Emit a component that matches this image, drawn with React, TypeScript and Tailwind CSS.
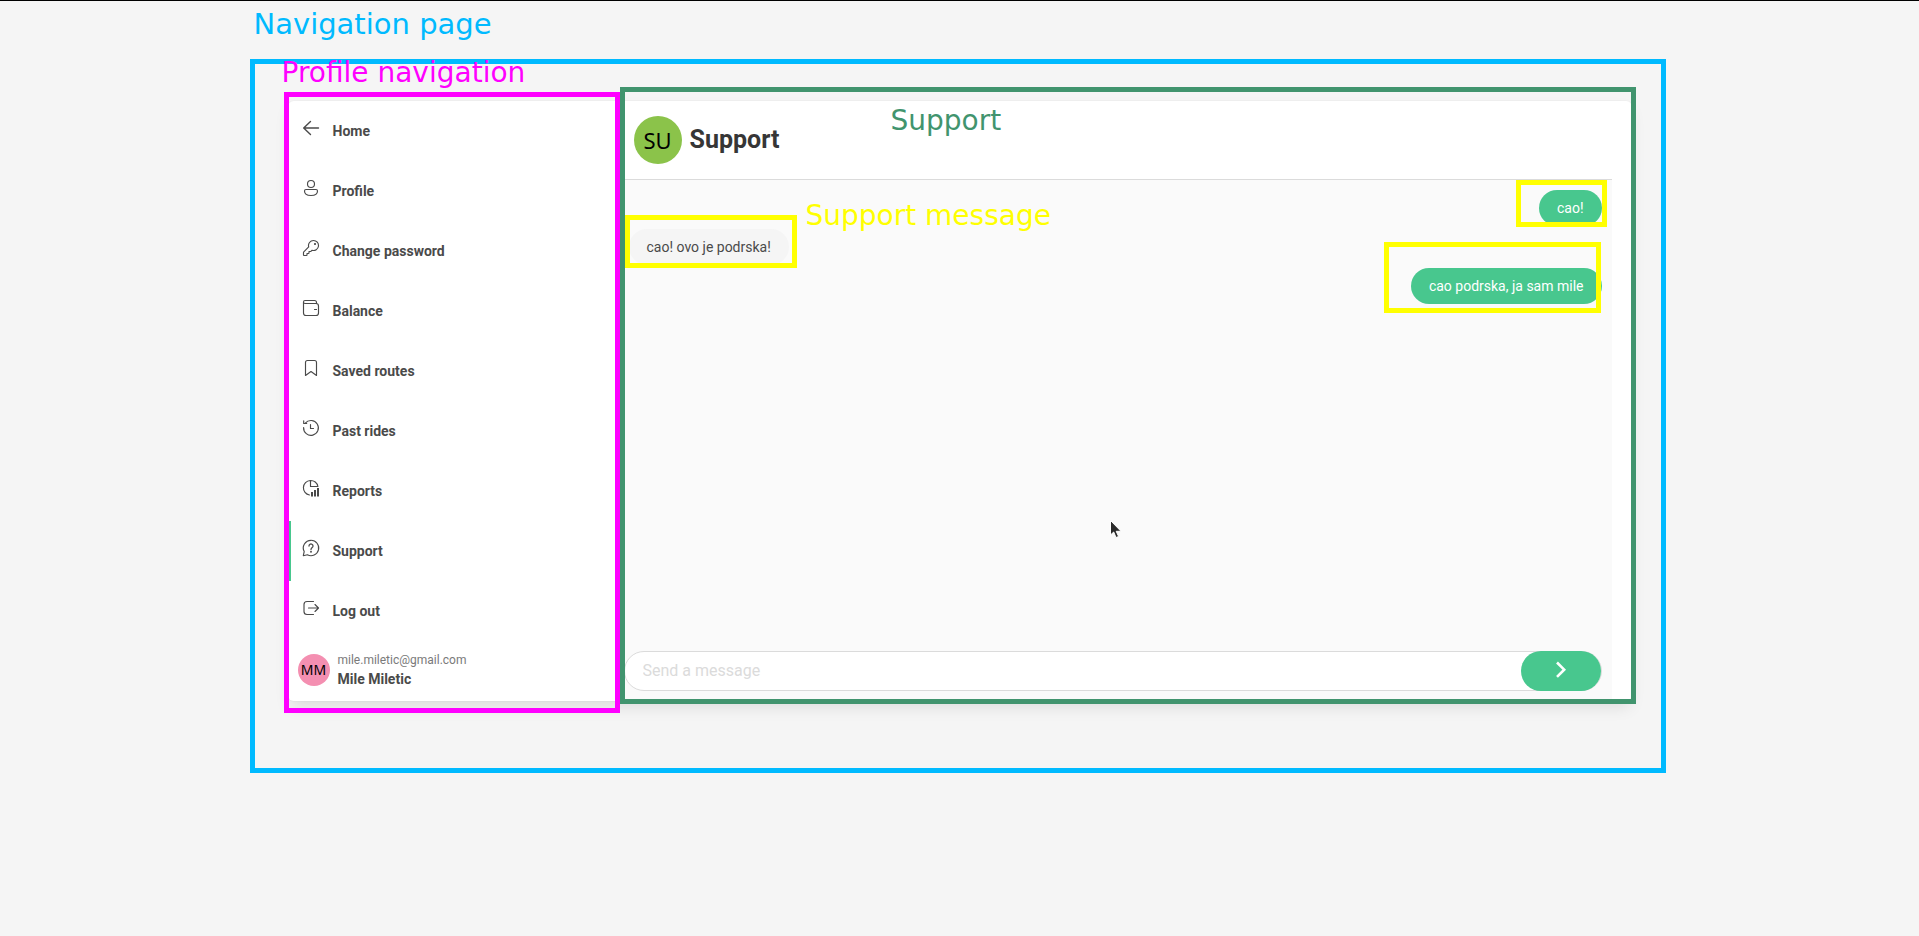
import type { ReactNode } from "react";

function Icon({ children }: { children: ReactNode }) {
  return (
    <svg
      viewBox="0 0 20 20"
      className="size-5"
      fill="none"
      stroke="currentColor"
      strokeWidth="1.15"
      strokeLinecap="round"
      strokeLinejoin="round"
      aria-hidden="true"
    >
      {children}
    </svg>
  );
}

const navItems: { label: string; icon: ReactNode; active?: boolean }[] = [
  {
    label: "Home",
    icon: <path strokeWidth="1.4" d="M9.5 3.5 2.7 10l6.8 6.5M2.9 10h14.6" />,
  },
  {
    label: "Profile",
    icon: (
      <>
        <circle cx="10" cy="6" r="3.5" />
        <path d="M5 11.5h10c.83 0 1.5.67 1.5 1.5 0 3-3 4.5-6.5 4.5S3.5 16 3.5 13c0-.83.67-1.5 1.5-1.5Z" />
      </>
    ),
  },
  {
    label: "Change password",
    icon: (
      <>
        <path d="M12.5 2.5a5 5 0 0 0-4.8 6.4l-4.9 4.9a1 1 0 0 0-.3.7v2.5c0 .3.2.5.5.5h2.5c.3 0 .5-.2.5-.5v-1.5h1.5c.3 0 .5-.2.5-.5v-1.5h1.5c.15 0 .3-.05.4-.15l1.2-1.05a5 5 0 1 0 1.4-9.8Z" />
        <circle cx="14" cy="6" r=".5" fill="currentColor" />
      </>
    ),
  },
  {
    label: "Balance",
    icon: (
      <>
        <path d="M2.5 4v11A2.5 2.5 0 0 0 5 17.5h10a2.5 2.5 0 0 0 2.5-2.5V8A2.5 2.5 0 0 0 15 5.5H4A1.5 1.5 0 0 1 4 2.5h9.5A2 2 0 0 1 15.5 4.5v1" />
        <path d="M13.5 11.5h2" />
      </>
    ),
  },
  {
    label: "Saved routes",
    icon: <path d="M4.5 4.5a2 2 0 0 1 2-2h7a2 2 0 0 1 2 2v13L10 13.5l-5.5 4Z" />,
  },
  {
    label: "Past rides",
    icon: (
      <>
        <path d="M4.3 5.2A7.4 7.4 0 1 1 2.6 9.5M2.7 2.7v2.8h3" />
        <path d="M9.5 6.5v4h3" />
      </>
    ),
  },
  {
    label: "Reports",
    icon: (
      <>
        <path d="M8.5 17A7.3 7.3 0 1 1 16.9 8.5H9.5v-6" />
        <path strokeWidth="2" strokeLinecap="butt" d="M11 18.5V14M14 18.5V12M17 18.5V10" />
      </>
    ),
  },
  {
    label: "Support",
    active: true,
    icon: (
      <>
        <path d="M10 2.3a7.7 7.7 0 1 1-3.6 14.5l-4.1.9.9-4.1A7.7 7.7 0 0 1 10 2.3Z" />
        <path strokeWidth="1.3" d="M8 8a2 2 0 1 1 3.2 1.6c-.8.6-1.2 1-1.2 1.9" />
        <circle cx="10" cy="13.7" r=".4" fill="currentColor" />
      </>
    ),
  },
  {
    label: "Log out",
    icon: (
      <>
        <path d="M12.5 3.5H6a3 3 0 0 0-3 3v7a3 3 0 0 0 3 3h6.5" />
        <path d="M7.5 10h10M14 6.5l3.500 3.500-3.500 3.500" />
      </>
    ),
  },
];

const messages = [
  { text: "cao!", mine: true, frame: "-left-[23px] -right-[5px] -top-[10px] -bottom-px" },
  { text: "cao! ovo je podrska!", mine: false, frame: "-left-1 -right-2 -top-[14px] -bottom-[3px]" },
  { text: "cao podrska, ja sam mile", mine: true, frame: "-left-[27px] right-px -top-[26px] -bottom-[9px]" },
];

const labelBase =
  "pointer-events-none absolute z-20 whitespace-nowrap font-['DejaVu_Sans',sans-serif] leading-8";
const frameBase = "pointer-events-none absolute z-10 border-[5px]";

function ProfileNavigation() {
  return (
    <aside className="relative w-1/4 shrink-0">
      <nav>
        <ul>
          {navItems.map((item) => (
            <li key={item.label}>
              <a
                href="#"
                className={`flex h-15 items-center gap-3 border-l-3 pl-[10px] text-sm font-bold ${
                  item.active ? "border-[#48c78e]" : "border-transparent"
                }`}
              >
                <span className="pb-1.5">
                  <Icon>{item.icon}</Icon>
                </span>
                {item.label}
              </a>
            </li>
          ))}
        </ul>
      </nav>
      <div className="flex h-15 items-center gap-2 pb-3 pl-[10px] pt-2.5">
        <span className="flex size-8 items-center justify-center rounded-full bg-[#f48fb1] font-['Noto_Sans',sans-serif] text-sm text-black">
          MM
        </span>
        <div>
          <p className="text-xs leading-[18px] text-[#7a7a7a]">mile.miletic@gmail.com</p>
          <p className="text-sm font-bold leading-5">Mile Miletic</p>
        </div>
      </div>
      <div className={`${frameBase} -bottom-3 -left-1 -top-[9px] right-1 border-[#ff00ff]`} />
      <span className={`${labelBase} -left-1.5 -top-11 text-[28px] text-[#ff00ff]`}>Profile navigation</span>
    </aside>
  );
}

function SupportChat() {
  return (
    <section className="relative flex grow flex-col pr-5">
      <header className="flex h-[79px] items-center gap-2 border-b border-[#dbdbdb] pl-[10px]">
        <span className="flex size-12 items-center justify-center rounded-full bg-[#8bc34a] font-['Noto_Sans',sans-serif] text-[22px] text-black">
          SU
        </span>
        <h1 className="text-[25px] font-bold text-[#363636]">Support</h1>
      </header>
      <div className="flex grow flex-col justify-between bg-[#fafafa] pb-[10px] pr-[10px]">
        <ul className="relative flex flex-col gap-[3px] pl-[5px] pt-[10px]">
          {messages.map((message) => (
            <li
              key={message.text}
              className={`relative flex h-9 items-center rounded-full px-[18px] text-sm ${
                message.mine ? "self-end bg-[#48c78e] text-white" : "self-start bg-[#f5f5f5]"
              }`}
            >
              {message.text}
              <div className={`${frameBase} border-[#ffff00] ${message.frame}`} />
            </li>
          ))}
          <li className="absolute left-[182px] top-5" aria-hidden="true">
            <span className={`${labelBase} left-0 top-0 text-[28px] text-[#ffff00]`}>Support message</span>
          </li>
        </ul>
        <form className="flex h-10 rounded-full border border-[#dbdbdb] bg-white" onSubmit={(e) => e.preventDefault()}>
          <input
            type="text"
            aria-label="Message"
            placeholder="Send a message"
            className="min-w-0 grow bg-transparent pl-[18px] text-base outline-none placeholder:text-[#dbdbdb]"
          />
          <button
            type="submit"
            aria-label="Send"
            className="-my-px flex w-20 items-center justify-center rounded-full bg-[#48c78e] text-white"
          >
            <svg viewBox="0 0 20 20" className="size-5" fill="none" stroke="currentColor" strokeWidth="2.6" aria-hidden="true">
              <path d="m6 1.5 7.2 7.2L6 15.900" />
            </svg>
          </button>
        </form>
      </div>
      <div className={`${frameBase} -bottom-[3px] -left-1 -right-1 -top-[14px] border-[#41946e]`} />
      <span className={`${labelBase} left-[267px] top-1 text-[28px] text-[#41946e]`}>Support</span>
      <svg viewBox="0 0 13 20" className="absolute left-[485px] top-[418px] h-5 w-[13px]" aria-hidden="true">
        <path d="M1.5 1.5V16l3.200-3L7 18.500l2.600-1-2.400-5.200H12Z" fill="#2b2b2b" stroke="#ffffff" strokeWidth="1" />
      </svg>
    </section>
  );
}

export default function App() {
  return (
    <div className="min-h-screen border-t border-black bg-[#f5f5f5] px-4 pt-[100px] font-[Roboto,sans-serif] text-[#4a4a4a]">
      <main className="relative mx-auto flex max-w-[1344px] rounded-md bg-white shadow-[0_8px_16px_-2px_rgba(10,10,10,0.1),0_0_0_1px_rgba(10,10,10,0.02)]">
        <div className={`${frameBase} -bottom-[72px] -left-[38px] -right-[34px] -top-[42px] border-[#00baff]`} />
        <span className={`${labelBase} -left-[34px] -top-[93px] text-[29px] text-[#00baff]`}>Navigation page</span>
        <ProfileNavigation />
        <SupportChat />
      </main>
    </div>
  );
}
